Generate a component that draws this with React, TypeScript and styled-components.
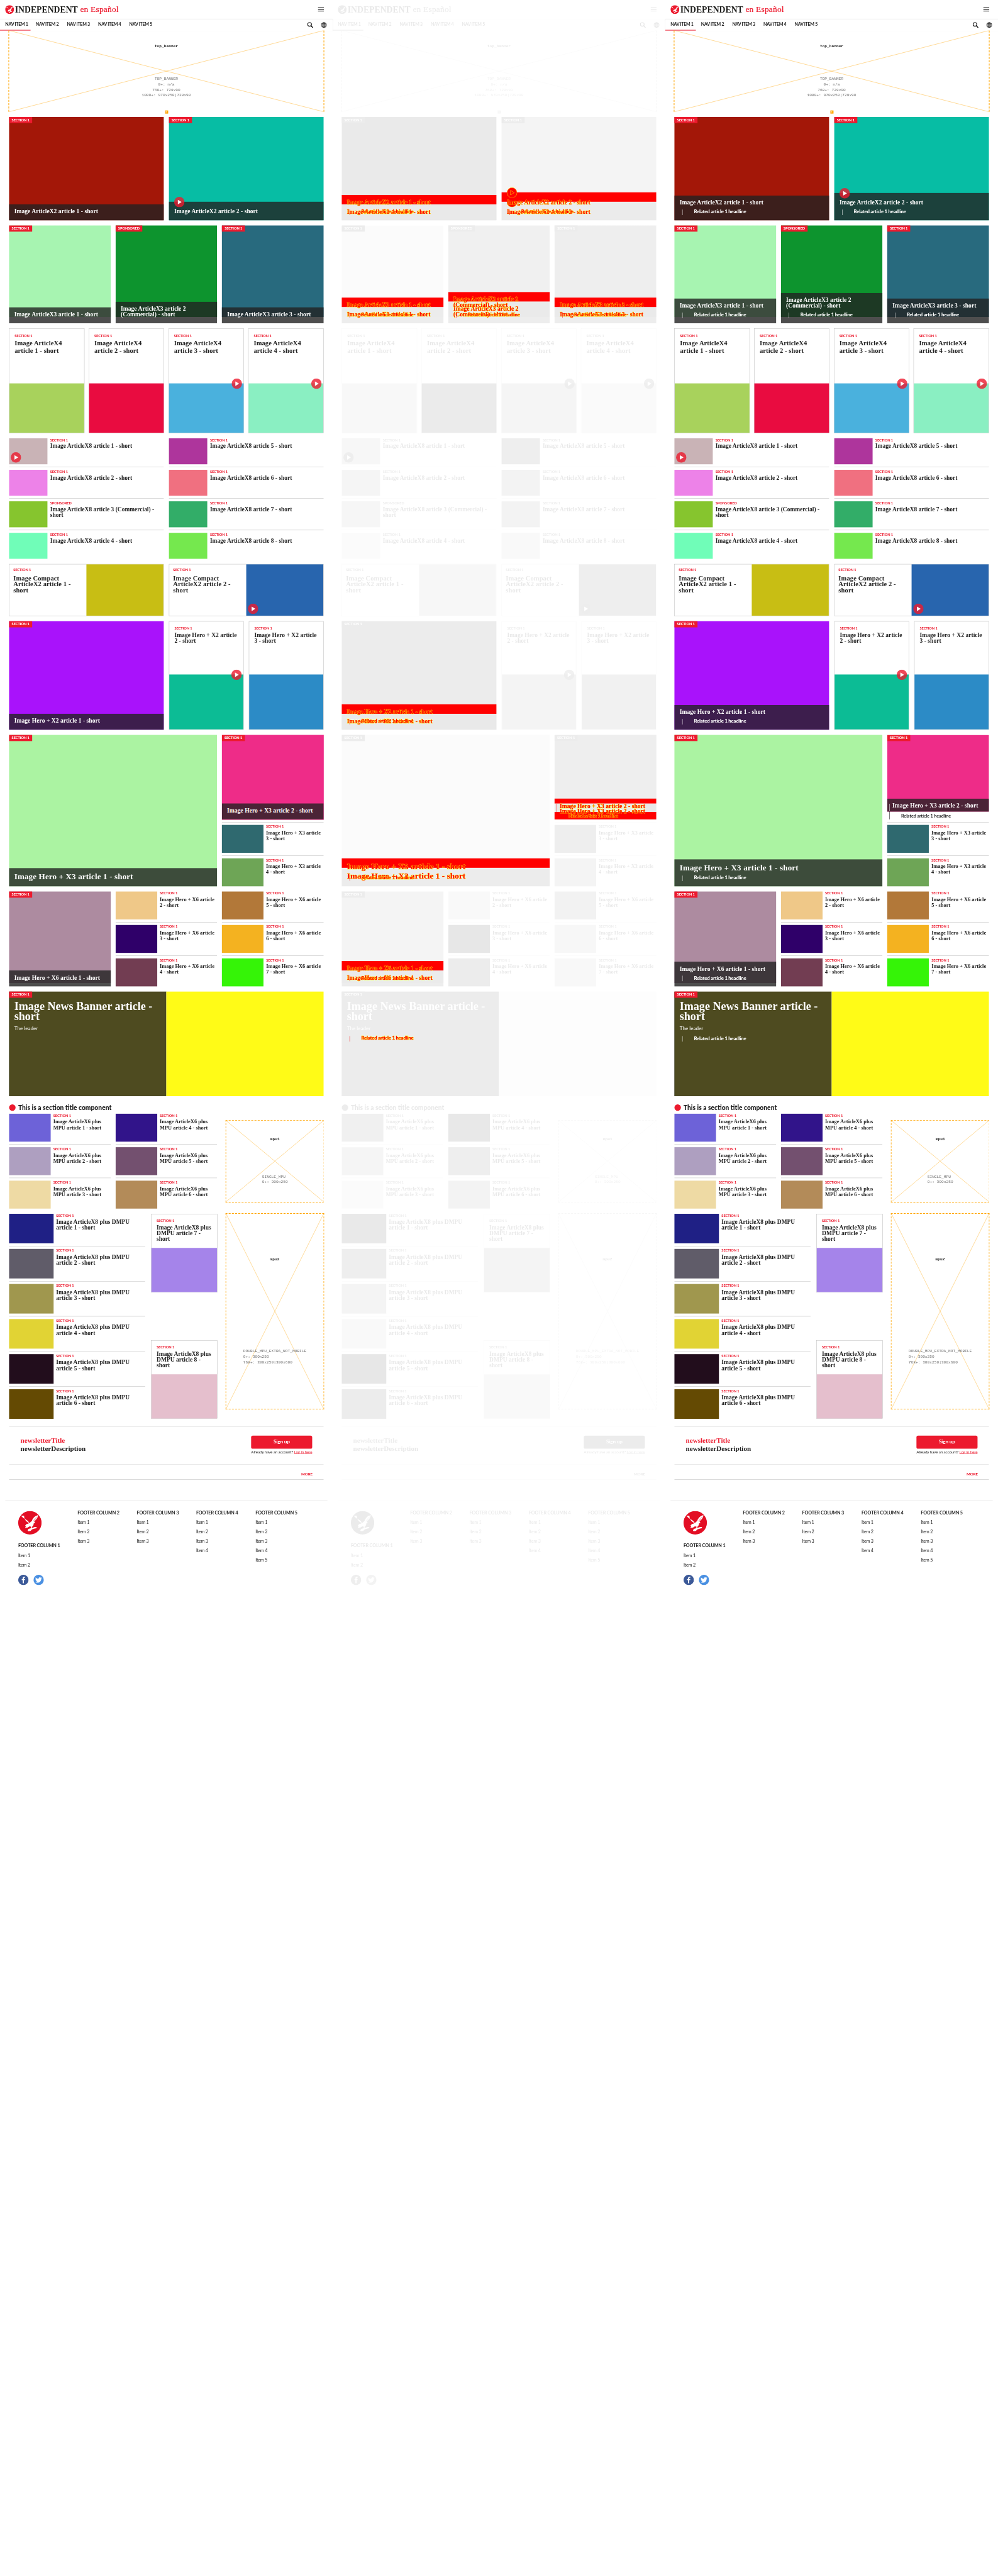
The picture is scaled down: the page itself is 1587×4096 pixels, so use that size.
import React from "react";
import styled, { createGlobalStyle, css } from "styled-components";

const SERIF = `"Liberation Serif", "Times New Roman", serif`;
const SANS = `Lato, "Open Sans", sans-serif`;
const MONO = `"Liberation Mono", "Courier New", monospace`;
const RED = "#ec1a2e";
const INK = "#222222";
const RULE = "#bababa";

const GlobalStyle = createGlobalStyle`
  * { box-sizing: border-box; }
  body { margin: 0; background: #fff; }
`;

/* ---------- frame ---------- */

const Viewport = styled.div`
  width: 1587px;
  height: 4096px;
  overflow: hidden;
  background: #fff;
`;

const Board = styled.div`
  display: flex;
  width: 3072px;
  height: 7928px;
  transform: scale(0.5166);
  transform-origin: 0 0;
`;

const Panel = styled.div`
  position: relative;
  width: 1024px;
  height: 7928px;
  flex: none;
`;

const Page = styled.div<{ $faded?: boolean }>`
  color: ${INK};
  font-family: ${SANS};
  ${(p) => p.$faded && css`filter: grayscale(1) opacity(0.1);`}
`;

const Main = styled.main`
  display: flex;
  flex-direction: column;
  gap: 16px;
  padding: 16px 28px 0;
`;

/* ---------- header ---------- */

const Masthead = styled.div`
  display: flex;
  align-items: center;
  justify-content: space-between;
  height: 59px;
  padding: 0 27px 0 16px;
  border-bottom: 1px solid #e5e5e5;
`;

const Brand = styled.div`
  display: flex;
  align-items: center;
  font-family: ${SERIF};
  white-space: pre;
`;

const BrandName = styled.span`
  margin-left: 3px;
  font-size: 26.6px;
  font-weight: 700;
  line-height: 30px;
  color: #1d1d1b;
`;

const BrandEdition = styled.span`
  margin-left: 7px;
  font-size: 26px;
  line-height: 28px;
  letter-spacing: 0.4px;
  color: ${RED};
  -webkit-text-stroke: 0.4px ${RED};
`;

const Burger = styled.div`
  display: flex;
  flex-direction: column;
  gap: 3px;
  width: 18px;
  span { height: 2px; background: #000; }
`;

const NavBar = styled.nav`
  display: flex;
  justify-content: space-between;
  height: 35px;
  padding-right: 18px;
  box-shadow: 0 1px 2px rgba(0, 0, 0, 0.28);
`;

const NavList = styled.div`
  display: flex;
`;

const NavItem = styled.div<{ $active?: boolean }>`
  width: ${(p) => (p.$active ? 94 : 96)}px;
  padding-left: 16px;
  font-size: 13.7px;
  font-weight: 700;
  letter-spacing: -0.55px;
  line-height: 31px;
  white-space: nowrap;
  border-bottom: 2px solid ${(p) => (p.$active ? RED : "transparent")};
`;

const NavIcons = styled.div`
  display: flex;
  align-items: center;
  gap: 24px;
`;

/* ---------- ad slots ---------- */

const AdBox = styled.div<{ $w: number; $h: number; $top: number; $gap: number; $sides?: boolean }>`
  position: relative;
  display: flex;
  flex-direction: column;
  align-items: center;
  flex: none;
  gap: ${(p) => p.$gap}px;
  width: ${(p) => p.$w}px;
  height: ${(p) => p.$h}px;
  padding-top: ${(p) => p.$top}px;
  border: 2px dashed orange;
  ${(p) => p.$sides && css`border-top: 0; border-bottom: 0; margin: 0 auto;`}
  font-family: ${MONO};
  font-size: 12px;
  line-height: 17px;
  white-space: pre;
`;

const AdCross = styled.svg`
  position: absolute;
  inset: 0;
  width: 100%;
  height: 100%;
`;

const AdName = styled.b`
  position: relative;
`;

const AdSizes = styled.div<{ $center?: boolean }>`
  position: relative;
  color: #707070;
  text-align: ${(p) => (p.$center ? "center" : "left")};
`;

const AdBadge = styled.span`
  position: absolute;
  left: 50%;
  bottom: -4px;
  width: 8px;
  height: 8px;
  margin-left: -4px;
  background: orange;
  color: #fff;
  font-size: 7px;
  line-height: 8px;
  text-align: center;
`;

const AdClip = styled.div<{ $x: number; $y: number; $w: number }>`
  width: ${(p) => p.$w}px;
  margin: ${(p) => p.$y}px 0 0 ${(p) => p.$x}px;
  overflow: hidden;
`;

/* ---------- article parts ---------- */

const Row = styled.section<{ $cols: string; $gap?: number; $h?: number }>`
  display: grid;
  grid-template-columns: ${(p) => p.$cols};
  column-gap: ${(p) => p.$gap ?? 16}px;
  ${(p) => p.$h && css`height: ${p.$h}px;`}
`;

const Column = styled.div<{ $between?: boolean }>`
  display: flex;
  flex-direction: column;
  min-width: 0;
  ${(p) => p.$between && css`justify-content: space-between;`}
`;

const HeroCard = styled.article<{ $color: string; $imageH?: number }>`
  display: flex;
  flex-direction: column;
  justify-content: space-between;
  align-items: flex-start;
  min-width: 0;
  height: 100%;
  background: ${(p) =>
    p.$imageH ? `linear-gradient(${p.$color} ${p.$imageH}px, #fff ${p.$imageH}px)` : p.$color};
`;

const Tag = styled.span`
  height: 19px;
  padding: 0 8px;
  background: ${RED};
  color: #fff;
  font-size: 11px;
  font-weight: 900;
  letter-spacing: -0.15px;
  line-height: 17.5px;
  white-space: nowrap;
`;

const Caption = styled.div<{ $play?: boolean; $short?: boolean }>`
  position: relative;
  width: 100%;
  padding: ${(p) => (p.$play ? 22 : 14)}px 16px ${(p) => (p.$short ? 9 : 16)}px;
  background: rgba(34, 34, 34, 0.8);
  color: #fff;
`;

const Headline = styled.h3<{ $size: number; $lh?: number; $ls?: number; $mt?: number }>`
  margin: ${(p) => p.$mt ?? 0}px 0 0;
  font-family: ${SERIF};
  font-size: ${(p) => p.$size}px;
  font-weight: 700;
  line-height: ${(p) => p.$lh ?? 18}px;
  letter-spacing: ${(p) => p.$ls ?? 0}px;
  white-space: pre;
`;

const CaptionTitle = styled(Headline)`
  margin-bottom: 2px;
`;

const Related = styled.div`
  height: 17px;
  margin: 12px 0 0 8px;
  padding-left: 35px;
  border-left: 1px solid #fff;
  color: #fff;
  font-size: 15px;
  font-weight: 900;
  letter-spacing: -0.33px;
  line-height: 13px;
  white-space: nowrap;
`;

const Label = styled.div`
  color: ${RED};
  font-size: 11px;
  font-weight: 900;
  letter-spacing: -0.15px;
  line-height: 9px;
  white-space: nowrap;
`;

const PlayBadge = styled.svg<{ $at: "edge" | "corner" | "caption" }>`
  position: absolute;
  width: 32px;
  height: 32px;
  ${(p) => p.$at === "edge" && css`right: 5px; top: -15px;`}
  ${(p) => p.$at === "corner" && css`left: 5px; bottom: 5px;`}
  ${(p) => p.$at === "caption" && css`left: 16px; top: -15px;`}
`;

const Bordered = styled.article<{ $row?: boolean; $h?: number }>`
  display: flex;
  flex-direction: ${(p) => (p.$row ? "row" : "column")};
  min-width: 0;
  height: ${(p) => (p.$h ? `${p.$h}px` : "100%")};
  border: 1px solid ${RULE};
`;

const CardText = styled.div<{ $h?: number; $w?: number; $pad: string }>`
  flex: none;
  ${(p) => p.$h && css`height: ${p.$h}px;`}
  ${(p) => p.$w && css`width: ${p.$w}px;`}
  padding: ${(p) => p.$pad};
`;

const Picture = styled.div<{ $color: string }>`
  position: relative;
  flex: 1;
  background: ${(p) => p.$color};
`;

const Item = styled.article<{ $rule?: boolean }>`
  display: flex;
  gap: 8px;
  padding-bottom: ${(p) => (p.$rule ? 8 : 0)}px;
  margin-bottom: ${(p) => (p.$rule ? 8 : 0)}px;
  border-bottom: ${(p) => (p.$rule ? `1px solid ${RULE}` : "0")};
`;

const Thumb = styled.div<{ $color: string; $w: number; $h: number }>`
  position: relative;
  flex: none;
  width: ${(p) => p.$w}px;
  height: ${(p) => p.$h}px;
  background: ${(p) => p.$color};
`;

const Divider = styled.div`
  height: 1px;
  margin: 8px 0;
  background: ${RULE};
`;

const SideHero = styled.div`
  position: relative;
  height: 260px;
`;

const SideHeroImage = styled.div<{ $h: number }>`
  height: ${(p) => p.$h}px;
`;

const SideRelated = styled.div`
  position: absolute;
  left: 7px;
  bottom: 0;
  display: flex;
  align-items: flex-end;
  height: 48px;
  padding: 0 0 2px 35px;
  border-left: 1px solid;
  border-image: linear-gradient(#fff 24px, #000 24px) 1;
  font-size: 13.9px;
  font-weight: 700;
  letter-spacing: -0.12px;
  line-height: 16px;
  white-space: nowrap;
`;

const Banner = styled.section`
  display: flex;
  height: 322px;
`;

const BannerText = styled.div`
  display: flex;
  flex-direction: column;
  align-items: flex-start;
  width: 484px;
  background: #4e4b20;
  box-shadow: inset 0 0 3px #46493a;
  color: #fff;
`;

const BannerBody = styled.div`
  padding: 10px 16px 0;
`;

const Leader = styled.p`
  margin: 8.6px 0 15.4px;
  font-size: 15.6px;
  line-height: 20px;
`;

const SectionTitle = styled.h2`
  display: flex;
  align-items: center;
  gap: 8px;
  height: 20px;
  margin: 9px 0 -7px;
  font-size: 19.9px;
  font-weight: 900;
  line-height: 18px;
  white-space: nowrap;
  &::before {
    content: "";
    width: 20px;
    height: 20px;
    border-radius: 50%;
    background: ${RED};
  }
`;

/* ---------- newsletter and footer ---------- */

const Newsletter = styled.section`
  display: flex;
  justify-content: space-between;
  height: 117px;
  margin-top: 8px;
  padding: 27px 35px 0;
  border: solid #d5d5d5;
  border-width: 1px 0;
`;

const NewsletterCopy = styled.div<{ $red?: boolean }>`
  font-family: ${SERIF};
  font-size: 21.5px;
  font-weight: 700;
  line-height: 23.5px;
  color: ${(p) => (p.$red ? RED : INK)};
`;

const NewsletterText = styled.div`
  padding-top: 4px;
`;

const SignUp = styled.button`
  display: block;
  width: 188px;
  height: 40px;
  padding: 0 0 4px;
  border: 0;
  border-radius: 5px;
  background: ${RED};
  color: #fff;
  font: 700 16px/36px ${SANS};
  letter-spacing: -0.3px;
`;

const Login = styled.div`
  display: flex;
  justify-content: space-between;
  width: 188px;
  margin-top: 2px;
  font-size: 12.3px;
  letter-spacing: -0.32px;
  line-height: 16px;
  white-space: nowrap;
  a { color: ${RED}; text-decoration: underline; }
`;

const MoreBar = styled.div`
  height: 46px;
  margin-top: -16px;
  padding: 22px 34px 0;
  border-bottom: 1px solid ${RULE};
  color: ${RED};
  font-size: 12px;
  font-weight: 900;
  letter-spacing: -0.3px;
  line-height: 16px;
  text-align: right;
`;

const Footer = styled.footer`
  display: grid;
  grid-template-columns: repeat(5, 182.6px);
  margin: 64px 16px 0;
  padding: 32px 0 0 40px;
  border-top: 1px solid #dcdcdc;
`;

const FooterTitle = styled.div<{ $mt?: number }>`
  margin: ${(p) => p.$mt ?? 0}px 0 9.6px;
  font-size: 14px;
  font-weight: 700;
  line-height: 10px;
  letter-spacing: -0.22px;
  white-space: nowrap;
`;

const FooterItem = styled.div`
  font-size: 14px;
  line-height: 29px;
  letter-spacing: -0.45px;
`;

const Socials = styled.div`
  display: flex;
  gap: 15px;
  margin-top: 17.6px;
`;

/* ---------- change markers, drawn over the faded page ---------- */

const DiffLayer = styled.div`
  position: absolute;
  inset: 0;
`;

const DiffBand = styled.div<{ $x: number; $y: number; $w: number; $h: number }>`
  position: absolute;
  left: ${(p) => p.$x}px;
  top: ${(p) => p.$y}px;
  width: ${(p) => p.$w}px;
  height: ${(p) => p.$h}px;
  background: #f00;
`;

const diffInk = css`
  color: #f00;
  -webkit-text-stroke: 1.3px #ff0;
  paint-order: stroke fill;
  white-space: pre;
`;

const DiffHeadline = styled.div<{ $x: number; $y: number; $size: number }>`
  position: absolute;
  left: ${(p) => p.$x}px;
  top: ${(p) => p.$y - 12 - p.$size * 0.3375}px;
  font: 700 ${(p) => p.$size}px/24px ${SERIF};
  letter-spacing: 0.1px;
  ${diffInk}
`;

const DiffRelated = styled.div<{ $x: number; $y: number; $small?: boolean }>`
  position: absolute;
  left: ${(p) => p.$x}px;
  top: ${(p) => p.$y - 14}px;
  font: ${(p) => (p.$small ? "700 13.9px" : "900 15px")}/17px ${SANS};
  letter-spacing: ${(p) => (p.$small ? -0.12 : -0.33)}px;
  ${diffInk}
`;

const DiffPlay = styled.svg<{ $x: number; $y: number }>`
  position: absolute;
  left: ${(p) => p.$x}px;
  top: ${(p) => p.$y}px;
  width: 32px;
  height: 32px;
`;

/* ---------- icons ---------- */

const Eagle = ({ size, color }: { size: number; color: string }) => (
  <svg width={size} height={size} viewBox="0 0 72 72" style={{ display: "block" }}>
    <circle cx="36" cy="36" r="36" fill={color} />
    <path
      fill="#fff"
      d="M9 14c3 4 6 7 11 10 5 3 11 6 14 12 1 1 2 0 3-1 1-2 3-3 5-4 1-5 4-9 8-13 3-3 7-4 11-6 0 4-1 7-3 10-2 4-5 7-9 10 2 1 3 3 2 6l-3-1c0 5-2 9-6 12l1 3 8-3 6 0-1 4-5 1-8 2-5 5-7 1-2-3 3-4 7-2 1-5-5-1-6 4-8 1 3-6-3-1 5-5c3-1 6-1 8-3-6-3-10-6-13-11-2-4-3-8-3-12z"
    />
    <path stroke={color} strokeWidth="0.9" d="M11 20l16 15M12 26l13 12M58 17L47 29M55 24l-8 8" />
  </svg>
);

const Play = ({ at }: { at: "edge" | "corner" | "caption" }) => (
  <PlayBadge $at={at} viewBox="0 0 32 32">
    <circle cx="16" cy="16" r="16" fill={RED} fillOpacity="0.8" />
    <path d="M11.5 9L23 16 11.5 23z" fill="#fff" />
  </PlayBadge>
);

const SearchIcon = () => (
  <svg width="18" height="18" viewBox="0 0 18 18" fill="none" stroke="#000">
    <circle cx="7" cy="6.8" r="5.8" strokeWidth="2" />
    <path d="M11 11l6 6" strokeWidth="2.6" />
  </svg>
);

const GlobeIcon = () => (
  <svg width="18" height="18" viewBox="0 0 18 18" fill="none" stroke="#111" strokeWidth="1.4">
    <circle cx="9" cy="9" r="8" />
    <ellipse cx="9" cy="9" rx="3.8" ry="8" />
    <path d="M9 1v16M1 9h16M2.2 5h13.6M2.2 13h13.6" />
  </svg>
);

const Facebook = () => (
  <svg width="32" height="32" viewBox="0 0 32 32">
    <circle cx="16" cy="16" r="16" fill="#3b5998" />
    <path
      fill="#fff"
      d="M14 26v-9.6h-3V13h3v-2.4C14 7.700 15.700 6 18.400 6c1.100 0 2.100.1 2.600.2v3h-1.700c-1.300 0-1.700.7-1.700 1.600V13h3.300l-.5 3.400h-2.800V26z"
    />
  </svg>
);

const Twitter = () => (
  <svg width="32" height="32" viewBox="0 0 32 32">
    <circle cx="16" cy="16" r="16" fill="#4a90e2" />
    <path
      fill="#fff"
      transform="translate(5.500 5.800) scale(0.86)"
      d="M23.950 4.570a10 10 0 0 1-2.820.77 4.960 4.960 0 0 0 2.160-2.720c-.95.55-2 .95-3.120 1.180a4.920 4.920 0 0 0-8.380 4.480C7.690 8.090 4.070 6.130 1.640 3.160a4.800 4.800 0 0 0-.67 2.480c0 1.710.87 3.210 2.190 4.100a4.900 4.900 0 0 1-2.230-.62v.06a4.920 4.920 0 0 0 3.950 4.830 5 5 0 0 1-2.210.08 4.940 4.940 0 0 0 4.600 3.420A9.870 9.870 0 0 1 0 19.540a13.990 13.990 0 0 0 7.550 2.210c9.050 0 14-7.500 14-13.980 0-.21 0-.42-.02-.63a9.940 9.940 0 0 0 2.460-2.550z"
    />
  </svg>
);

/* ---------- composed pieces ---------- */

const RELATED = "Related article 1 headline";

const Ad = ({
  name, sizes, w, h, top, gap, center,
}: {
  name: string; sizes: string; w: number; h: number; top: number; gap: number; center?: boolean;
}) => (
  <AdBox $w={w} $h={h} $top={top} $gap={gap} $sides={center}>
    <AdCross viewBox="0 0 100 100" preserveAspectRatio="none" stroke="orange">
      <path d="M0 0L100 100M100 0L0 100" vectorEffect="non-scaling-stroke" strokeWidth="0.8" />
    </AdCross>
    <AdName>{name}</AdName>
    <AdSizes $center={center}>{sizes}</AdSizes>
    {center && <AdBadge>0</AdBadge>}
  </AdBox>
);

const Hero = ({
  title, color, related, tag = "SECTION 1", size = 18.4, lh = 17, imageH, play,
}: {
  title: string; color: string; related: boolean; tag?: string; size?: number; lh?: number; imageH?: number; play?: boolean;
}) => (
  <HeroCard $color={color} $imageH={imageH}>
    <Tag>{tag}</Tag>
    <Caption $play={play}>
      {play && <Play at="caption" />}
      <CaptionTitle $size={size} $lh={lh} $ls={size > 20 ? 0.3 : 0.12}>{title}</CaptionTitle>
      {related && <Related>{RELATED}</Related>}
    </Caption>
  </HeroCard>
);

const Stacked = ({
  title, color, textH, size = 18.4, lh = 18, mt = 6.6, ls = 0.08, play, h,
}: {
  title: string; color: string; textH: number; size?: number; lh?: number; mt?: number; ls?: number; play?: boolean; h?: number;
}) => (
  <Bordered $h={h}>
    <CardText $h={textH} $pad="16.2px 16px 0">
      <Label>SECTION 1</Label>
      <Headline $size={size} $lh={lh} $mt={mt} $ls={ls}>{title}</Headline>
    </CardText>
    <Picture $color={color}>{play && <Play at="edge" />}</Picture>
  </Bordered>
);

const Compact = ({ title, color, play }: { title: string; color: string; play?: boolean }) => (
  <Bordered $row>
    <CardText $w={237} $pad="12.4px 12px 0">
      <Label>SECTION 1</Label>
      <Headline $size={20.4} $mt={13} $ls={0.2}>{title}</Headline>
    </CardText>
    <Picture $color={color}>{play && <Play at="corner" />}</Picture>
  </Bordered>
);

type Entry = { title: string; color: string; label?: string; play?: boolean };

const List = ({ entries, w, h, size }: { entries: Entry[]; w: number; h: number; size: number }) => (
  <Column>
    {entries.map((e, i) => (
      <Item key={e.title} $rule={i < entries.length - 1}>
        <Thumb $color={e.color} $w={w} $h={h}>{e.play && <Play at="corner" />}</Thumb>
        <div>
          <Label>{e.label ?? "SECTION 1"}</Label>
          <Headline $size={size} $mt={6.5} $ls={0.05}>{e.title}</Headline>
        </div>
      </Item>
    ))}
  </Column>
);

const numbered = (colors: string[], first: number, make: (n: number) => string): Entry[] =>
  colors.map((color, i) => ({ color, title: make(first + i) }));

const x8 = (n: number) => `Image ArticleX8 article ${n} - short`;
const x8Left: Entry[] = [
  { title: x8(1), color: "#c9b3b6", play: true },
  { title: x8(2), color: "#ed82e8" },
  { title: "Image ArticleX8 article 3 (Commercial) -\nshort", color: "#86c52e", label: "SPONSORED" },
  { title: x8(4), color: "#70fdb8" },
];
const x8Right = numbered(["#ae359c", "#f07080", "#32ad68", "#75e84e"], 5, x8);
const heroX3 = (n: number) => `Image Hero + X3 article\n${n} - short`;
const heroX6 = (n: number) => `Image Hero + X6 article\n${n} - short`;
const mpuX6 = (n: number) => `Image ArticleX6 plus\nMPU article ${n} - short`;
const dmpuX8 = (n: number) => `Image ArticleX8 plus DMPU\narticle ${n} - short`;

const footerColumns = [3, 3, 4, 5];
const range = (n: number) => Array.from({ length: n }, (_, i) => i + 1);

const FrontPage = ({ related = false, faded = false }: { related?: boolean; faded?: boolean }) => (
  <Page $faded={faded}>
    <Masthead>
      <Brand>
        <Eagle size={27} color={RED} />
        <BrandName>INDEPENDENT</BrandName>
        <BrandEdition>en Español</BrandEdition>
      </Brand>
      <Burger><span /><span /><span /></Burger>
    </Masthead>
    <NavBar>
      <NavList>
        {range(5).map((n) => <NavItem key={n} $active={n === 1}>NAV ITEM {n}</NavItem>)}
      </NavList>
      <NavIcons><SearchIcon /><GlobeIcon /></NavIcons>
    </NavBar>
    <Ad
      name="top_banner" center w={972} h={250} top={39.5} gap={84}
      sizes={"TOP_BANNER\n0+: n/a\n768+: 728x90\n1000+: 970x250|728x90"}
    />
    <Main>
      <Row $cols="1fr 1fr" $h={318}>
        <Hero related={related} color="#a31708" title="Image ArticleX2 article 1 - short" />
        <Hero related={related} color="#07bda4" play title="Image ArticleX2 article 2 - short" />
      </Row>
      <Row $cols="1fr 1fr 1fr" $gap={15} $h={300.5}>
        <Hero related={related} imageH={282} color="#a7f4b1" title="Image ArticleX3 article 1 - short" />
        <Hero related={related} imageH={282} color="#0d942e" tag="SPONSORED" title={"Image ArticleX3 article 2\n(Commercial) - short"} />
        <Hero related={related} imageH={282} color="#286a7e" title="Image ArticleX3 article 3 - short" />
      </Row>
      <Row $cols="repeat(4, 1fr)" $gap={13.33} $h={322.3}>
        {["#a8d25c", "#e90c40", "#4ab1dd", "#8aefc2"].map((color, i) => (
          <Stacked
            key={color} color={color} textH={168.5} size={20.4} lh={22} mt={8.8} ls={0.17} play={i > 1}
            title={`Image ArticleX4\narticle ${i + 1} - short`}
          />
        ))}
      </Row>
      <Row $cols="1fr 1fr" $h={371}>
        <List entries={x8Left} w={118.3} h={80} size={18.2} />
        <List entries={x8Right} w={118.3} h={80} size={18.2} />
      </Row>
      <Row $cols="1fr 1fr" $h={160}>
        <Compact color="#c8be14" title={"Image Compact\nArticleX2 article 1 -\nshort"} />
        <Compact color="#2865ae" play title={"Image Compact\nArticleX2 article 2 -\nshort"} />
      </Row>
      <Row $cols="476px 1fr 1fr" $h={334}>
        <Hero related={related} color="#a912fb" title="Image Hero + X2 article 1 - short" />
        <Stacked color="#0cbc95" textH={163} play title={"Image Hero + X2 article\n2 - short"} />
        <Stacked color="#2c8bc6" textH={163} title={"Image Hero + X2 article\n3 - short"} />
      </Row>
      <Row $cols="640px 313px" $gap={15} $h={466}>
        <Hero related={related} size={25.2} lh={24} color="#abf3a2" title="Image Hero + X3 article 1 - short" />
        <Column>
          <SideHero>
            <SideHeroImage $h={related ? 236.7 : 260}>
              <HeroCard $color="#ee2c88">
                <Tag>SECTION 1</Tag>
                <Caption $short={related}>
                  <CaptionTitle $size={18.4} $lh={related ? 15.5 : 17} $ls={0.12}>Image Hero + X3 article 2 - short</CaptionTitle>
                </Caption>
              </HeroCard>
            </SideHeroImage>
            {related && <SideRelated>{RELATED}</SideRelated>}
          </SideHero>
          <Divider />
          <List entries={numbered(["#2f696f", "#6ea556"], 3, heroX3)} w={128} h={86} size={16.2} />
        </Column>
      </Row>
      <Row $cols="1fr 1fr 1fr" $gap={15} $h={292.4}>
        <Hero related={related} imageH={281} color="#ad8ba0" title="Image Hero + X6 article 1 - short" />
        <List entries={numbered(["#efc888", "#2f0069", "#723d52"], 2, heroX6)} w={128} h={86} size={16.2} />
        <List entries={numbered(["#b27839", "#f4b220", "#35f407"], 5, heroX6)} w={128} h={86} size={16.2} />
      </Row>
      <Banner>
        <BannerText>
          <Tag>SECTION 1</Tag>
          <BannerBody>
            <Headline $size={35} $lh={32}>{"Image News Banner article -\nshort"}</Headline>
            <Leader>The leader</Leader>
            {related && <Related>{RELATED}</Related>}
          </BannerBody>
        </BannerText>
        <Picture $color="#fffb17" />
      </Banner>
      <SectionTitle>This is a section title component</SectionTitle>
      <Row $cols="312.67px 312.67px 1fr" $gap={15} $h={292}>
        <List entries={numbered(["#6d62d8", "#ae9fc0", "#eedaa4"], 1, mpuX6)} w={128} h={86} size={16.2} />
        <List entries={numbered(["#31148a", "#73506f", "#b38b59"], 4, mpuX6)} w={128} h={86} size={16.2} />
        <AdClip $x={11} $y={19} $w={302}>
          <Ad name="mpu1" w={304} h={254} top={48.5} gap={99} sizes={"SINGLE_MPU\n0+: 300x250"} />
        </AdClip>
      </Row>
      <Row $cols="419px 204px 1fr" $gap={18} $h={631}>
        <List
          entries={numbered(["#1f2085", "#605c69", "#a0974e", "#e1d334", "#220d1c", "#644a03"], 1, dmpuX8)}
          w={137} h={91} size={18.3}
        />
        <Column $between>
          <Stacked color="#a584ea" h={242} textH={104} title={"Image ArticleX8 plus\nDMPU article 7 -\nshort"} />
          <Stacked color="#e5bfcd" h={242} textH={104} title={"Image ArticleX8 plus\nDMPU article 8 -\nshort"} />
        </Column>
        <AdClip $x={7} $y={-2} $w={304}>
          <Ad
            name="mpu2" w={304} h={604} top={131.5} gap={266}
            sizes={"DOUBLE_MPU_EXTRA_NOT_MOBILE\n0+: 300x250\n768+: 300x250|300x600"}
          />
        </AdClip>
      </Row>
      <Newsletter>
        <NewsletterText>
          <NewsletterCopy $red>newsletterTitle</NewsletterCopy>
          <NewsletterCopy>newsletterDescription</NewsletterCopy>
        </NewsletterText>
        <div>
          <SignUp>Sign up</SignUp>
          <Login><span>Already have an account?</span><a>Log in here</a></Login>
        </div>
      </Newsletter>
      <MoreBar>MORE</MoreBar>
    </Main>
    <Footer>
      <div>
        <Eagle size={72} color="#e30e24" />
        <FooterTitle $mt={29}>FOOTER COLUMN 1</FooterTitle>
        {range(2).map((n) => <FooterItem key={n}>Item {n}</FooterItem>)}
        <Socials><Facebook /><Twitter /></Socials>
      </div>
      {footerColumns.map((count, i) => (
        <div key={i}>
          <FooterTitle>FOOTER COLUMN {i + 2}</FooterTitle>
          {range(count).map((n) => <FooterItem key={n}>Item {n}</FooterItem>)}
        </div>
      ))}
    </Footer>
  </Page>
);

const changes = [
  { x: 28, y: 600, w: 476, base: 629, size: 18.4, text: "Image ArticleX2 article 1 - short" },
  { x: 520, y: 592, w: 476, base: 629, size: 18.4, text: "Image ArticleX2 article 2 - short" },
  { x: 28, y: 916, w: 312.7, base: 945, size: 18.4, text: "Image ArticleX3 article 1 - short" },
  { x: 355.7, y: 899, w: 312.7, base: 945, size: 18.4, text: "(Commercial) - short", first: "Image ArticleX3 article 2" },
  { x: 683.3, y: 916, w: 312.7, base: 945, size: 18.4, text: "Image ArticleX3 article 3 - short" },
  { x: 28, y: 2168, w: 476, base: 2197, size: 18.4, text: "Image Hero + X2 article 1 - short" },
  { x: 28, y: 2642, w: 640, base: 2676, size: 25.6, text: "Image Hero + X3 article 1 - short" },
  { x: 28, y: 2958, w: 312.7, base: 2987, size: 18.4, text: "Image Hero + X6 article 1 - short" },
];

const Change = ({ c }: { c: (typeof changes)[number] }) => (
  <>
    <DiffBand $x={c.x} $y={c.y} $w={c.w} $h={29} />
    {c.first && <DiffHeadline $x={c.x + 16} $y={c.base - 17} $size={c.size}>{c.first}</DiffHeadline>}
    {c.first && <DiffHeadline $x={c.x + 16} $y={c.base + 12} $size={c.size}>{c.first}</DiffHeadline>}
    <DiffHeadline $x={c.x + 16} $y={c.base} $size={c.size}>{c.text}</DiffHeadline>
    <DiffHeadline $x={c.x + 16} $y={c.base + 29} $size={c.size}>{c.text}</DiffHeadline>
    <DiffBand $x={c.x + 24} $y={c.base + (c.size > 20 ? 18 : 16)} $w={1} $h={17} />
    <DiffRelated $x={c.x + 60} $y={c.base + (c.size > 20 ? 30 : 28)}>{RELATED}</DiffRelated>
  </>
);

const DiffBadge = ({ x, y }: { x: number; y: number }) => (
  <DiffPlay $x={x} $y={y} viewBox="0 0 32 32" stroke="#ff0" fill="#f00">
    <circle cx="16" cy="16" r="15.500" />
    <path d="M11.500 9L23 16 11.500 23z" />
  </DiffPlay>
);

export default function App() {
  return (
    <>
      <GlobalStyle />
      <Viewport>
        <Board>
          <Panel><FrontPage /></Panel>
          <Panel>
            <FrontPage faded />
            <DiffLayer>
              <DiffBadge x={536} y={606} />
              {changes.map((c) => <Change key={c.text} c={c} />)}
              <DiffBadge x={536} y={577} />
              <DiffBand $x={683.3} $y={2458} $w={312.7} $h={15} />
              <DiffBand $x={683.3} $y={2498.7} $w={312.7} $h={23.3} />
              <DiffBand $x={690} $y={2474} $w={1} $h={25} />
              <DiffHeadline $x={699} $y={2487} $size={18.4}>Image Hero + X3 article 2 - short</DiffHeadline>
              <DiffHeadline $x={699} $y={2502} $size={18.4}>Image Hero + X3 article 2 - short</DiffHeadline>
              <DiffRelated $small $x={726} $y={2517}>{RELATED}</DiffRelated>
              <DiffBand $x={52} $y={3189} $w={1} $h={17} />
              <DiffRelated $x={88} $y={3200}>{RELATED}</DiffRelated>
            </DiffLayer>
          </Panel>
          <Panel><FrontPage related /></Panel>
        </Board>
      </Viewport>
    </>
  );
}
